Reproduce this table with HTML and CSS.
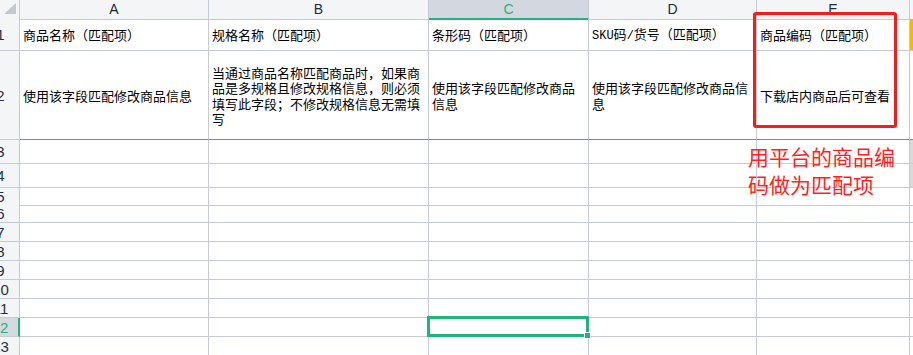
FILE: index.html
```html
<!DOCTYPE html>
<html lang="zh-CN">
<head>
    <meta charset="UTF-8">
    <meta name="viewport" content="width=device-width, initial-scale=1.0">
    <title>商品匹配项</title>
    <link rel="stylesheet" href="styles.css">
</head>
<body>
    <div class="sheet">
        <div class="row r-head">
            <div class="corner"><span class="corner-mark"></span></div>
            <div class="col-head">A</div>
            <div class="col-head">B</div>
            <div class="col-head active">C</div>
            <div class="col-head">D</div>
            <div class="col-head">E</div>
            <div class="col-head"></div>
        </div>

        <div class="row r-title">
            <div class="row-head">1</div>
            <div class="cell"><span>商品名称（匹配项）</span></div>
            <div class="cell"><span>规格名称（匹配项）</span></div>
            <div class="cell"><span>条形码（匹配项）</span></div>
            <div class="cell"><span><span class="latin">SKU</span>码<span class="latin">/</span>货号（匹配项）</span></div>
            <div class="cell"><span>商品编码（匹配项）</span></div>
            <div class="cell fill-yellow"></div>
        </div>

        <div class="row r-note frozen">
            <div class="row-head">2</div>
            <div class="cell"><span>使用该字段匹配修改商品信息</span></div>
            <div class="cell"><span>当通过商品名称匹配商品时，如果商品是多规格且修改规格信息，则必须填写此字段；不修改规格信息无需填写</span></div>
            <div class="cell"><span>使用该字段匹配修改商品信息</span></div>
            <div class="cell"><span>使用该字段匹配修改商品信息</span></div>
            <div class="cell"><span>下载店内商品后可查看</span></div>
            <div class="cell"></div>
        </div>

        <div class="row r-tall">
            <div class="row-head">3</div>
            <div></div><div></div><div></div><div></div><div></div><div class="fill-gray"></div>
        </div>
        <div class="row r-tall">
            <div class="row-head">4</div>
            <div></div><div></div><div></div><div></div><div></div><div class="fill-gray"></div>
        </div>
        <div class="row r-short">
            <div class="row-head">5</div>
            <div></div><div></div><div></div><div></div><div></div><div></div>
        </div>
        <div class="row">
            <div class="row-head">6</div>
            <div></div><div></div><div></div><div></div><div></div><div></div>
        </div>
        <div class="row">
            <div class="row-head">7</div>
            <div></div><div></div><div></div><div></div><div></div><div></div>
        </div>
        <div class="row">
            <div class="row-head">8</div>
            <div></div><div></div><div></div><div></div><div></div><div></div>
        </div>
        <div class="row">
            <div class="row-head">9</div>
            <div></div><div></div><div></div><div></div><div></div><div></div>
        </div>
        <div class="row">
            <div class="row-head">10</div>
            <div></div><div></div><div></div><div></div><div></div><div></div>
        </div>
        <div class="row">
            <div class="row-head">11</div>
            <div></div><div></div><div></div><div></div><div></div><div></div>
        </div>
        <div class="row">
            <div class="row-head active">12</div>
            <div></div><div></div><div class="selected"><span class="handle"></span></div><div></div><div></div><div></div>
        </div>
        <div class="row">
            <div class="row-head">13</div>
            <div></div><div></div><div></div><div></div><div></div><div></div>
        </div>

        <!-- 批注：红框和说明文字 -->
        <div class="mark-box"></div>
        <div class="mark-note">用平台的商品编<br>码做为匹配项</div>
    </div>
</body>
</html>
```

FILE: styles.css
```css
body {
    margin: 0;
    overflow: hidden;
    background-color: #fff;
    font-family: "Noto Sans CJK SC", sans-serif;
    color: #000;
}
.sheet {
    position: relative;
    width: 913px;
    height: 355px;
    overflow: hidden;
}
.row {
    display: grid;
    grid-template-columns: 38px 189px 220px 160px 168px 153px 60px;
    height: 19px;
    margin-left: -18px;
}
.row > div {
    box-sizing: border-box;
    border-right: 1px solid #c5cad6;
    border-bottom: 1px solid #c5cad6;
    min-width: 0;
}
.r-title { height: 32px; }
.r-note  { height: 89px; }
.r-tall  { height: 24px; }
.r-short { height: 16px; }

/* 冻结窗格分隔线 */
.frozen > div:not(.row-head) {
    border-bottom-color: #37b27a;
}

/* 表头 */
.corner {
    background-color: #f4f5f7;
    display: flex;
    justify-content: flex-end;
    align-items: flex-end;
    padding: 0 3px 5px 0;
}
.corner-mark {
    width: 0;
    height: 0;
    border-left: 12px solid transparent;
    border-bottom: 11px solid #c3c7ce;
}
.col-head {
    background-color: #f4f5f7;
    font-family: "Liberation Sans", Arial, sans-serif;
    font-size: 14px;
    line-height: 18px;
    text-align: center;
    color: #1f2a3d;
}
.col-head.active {
    background-color: #d3d7df;
    border-bottom: 2px solid #1fb57a !important;
    color: #1fb57a;
}
.row-head {
    background-color: #f4f5f7;
    font-family: "Liberation Sans", Arial, sans-serif;
    font-size: 15px;
    color: #26304a;
    display: flex;
    align-items: center;
    justify-content: center;
}
.row-head.active {
    background-color: #d6d9e0;
    border-right: 2px solid #1fb57a !important;
    color: #1fb57a;
}

/* 单元格 */
.cell {
    display: flex;
    align-items: center;
    padding: 1px 5px 0 3px;
    font-size: 13px;
    line-height: 15.5px;
}
.latin {
    font-family: "Liberation Mono", monospace;
    font-size: 12px;
}
.fill-yellow { background-color: #f8b800; }
.fill-gray { background-color: #dadada; }

.selected {
    position: relative;
}
.selected::after {
    content: "";
    position: absolute;
    left: -2px;
    top: -2px;
    right: -1px;
    bottom: -1px;
    border: 3px solid #1fb57a;
}
.handle {
    position: absolute;
    right: -3px;
    bottom: -3px;
    width: 5px;
    height: 5px;
    background-color: #1fb57a;
    border: 1px solid #fff;
    z-index: 1;
}

/* 批注 */
.mark-box {
    position: absolute;
    left: 753px;
    top: 12px;
    width: 144px;
    height: 116px;
    box-sizing: border-box;
    border: 3px solid #f31d1b;
    border-radius: 3px;
}
.mark-note {
    position: absolute;
    left: 748px;
    top: 142px;
    font-size: 21px;
    line-height: 28px;
    color: #ff1f1f;
    white-space: nowrap;
}
```
